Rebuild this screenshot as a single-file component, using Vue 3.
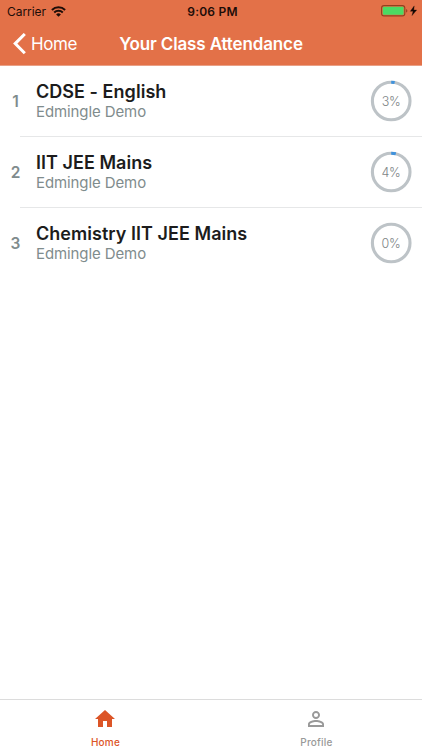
<script setup>
const classes = [
  { id: 1, name: 'CDSE - English', org: 'Edmingle Demo', percent: 3 },
  { id: 2, name: 'IIT JEE Mains', org: 'Edmingle Demo', percent: 4 },
  { id: 3, name: 'Chemistry IIT JEE Mains', org: 'Edmingle Demo', percent: 0 },
]
</script>

<template>
  <div class="screen">
    <header class="header">
      <div class="status">
        <div class="status-left">
          <span class="carrier">Carrier</span>
          <svg width="15" height="11" viewBox="0 0 15 11">
            <path d="M.9 4a9.5 9.5 0 0 1 13.2 0M3.2 6.5a6.1 6.1 0 0 1 8.6 0" fill="none" stroke="#1d0d08" stroke-width="2" />
            <path d="M5.1 8.4a3.4 3.4 0 0 1 4.8 0L7.5 10.8z" fill="#1d0d08" />
          </svg>
        </div>
        <span class="clock">9:06 PM</span>
        <div class="status-right">
          <svg width="37" height="12" viewBox="0 0 37 12">
            <rect x="0.6" y="0.6" width="23.2" height="10.3" rx="2.4" fill="none" stroke="#93401f" stroke-width="1.1" />
            <rect x="1.8" y="1.8" width="20.8" height="7.9" rx="1" fill="#4bdb63" />
            <path d="M25.1 4c1.7.4 1.7 3.2 0 3.6z" fill="#93401f" />
            <path d="M33.2.9 29.3 6.3h2.8l-1.1 4.3 4.7-5.6h-2.9z" fill="#120704" stroke="#120704" stroke-width=".3" />
          </svg>
        </div>
      </div>
      <nav class="nav">
        <div class="back">
          <svg width="14" height="22" viewBox="0 0 14 22">
            <path d="M12.8 1 3.2 10.6l9.6 9.6" fill="none" stroke="#fff" stroke-width="3" />
          </svg>
          <span class="back-label">Home</span>
        </div>
        <h1 class="title">Your Class Attendance</h1>
      </nav>
    </header>

    <main class="list">
      <div v-for="item in classes" :key="item.id" class="row">
        <span class="index">{{ item.id }}</span>
        <div class="info">
          <div class="name">{{ item.name }}</div>
          <div class="org">{{ item.org }}</div>
        </div>
        <div class="ring">
          <svg width="42" height="42" viewBox="0 0 42 42">
            <circle cx="21.2" cy="21" r="18.8" fill="none" stroke="#bdc3c7" stroke-width="3.1" />
            <circle v-if="item.percent" cx="21.2" cy="21" r="18.8" fill="none" stroke="#3f92dc" stroke-width="3.1" pathLength="100" :stroke-dasharray="`${item.percent} 100`" transform="rotate(-90 21.2 21)" />
          </svg>
          <span class="percent">{{ item.percent }}%</span>
        </div>
      </div>
    </main>

    <footer class="tabs">
      <div class="tab active">
        <svg width="24" height="24" viewBox="0 0 24 24">
          <path d="M10 20v-6h4v6h5v-8h3L12 3 2 12h3v8z" fill="#dc5527" />
        </svg>
        <span>Home</span>
      </div>
      <div class="tab">
        <svg width="24" height="24" viewBox="0 0 24 24">
          <path d="M12 5.9a2.1 2.1 0 1 1 0 4.2 2.1 2.1 0 0 1 0-4.2m0 9c2.97 0 6.1 1.46 6.1 2.1v1.1H5.9V17c0-.64 3.13-2.1 6.1-2.1M12 4C9.79 4 8 5.79 8 8s1.79 4 4 4 4-1.79 4-4-1.79-4-4-4m0 9c-2.67 0-8 1.34-8 4v3h16v-3c0-2.66-5.33-4-8-4" fill="#999" />
        </svg>
        <span>Profile</span>
      </div>
    </footer>
  </div>
</template>

<style>
body {
  margin: 0;
}
</style>

<style scoped>
.screen {
  width: 422px;
  height: 750px;
  display: flex;
  flex-direction: column;
  overflow: hidden;
  background: #fff;
  font-family: Inter, "Liberation Sans", sans-serif;
  white-space: nowrap;
}
svg {
  display: block;
  flex: none;
}
.header {
  flex: none;
  box-sizing: border-box;
  height: 66px;
  background: #e37148;
  border-bottom: 1px solid #e9a086;
}
.status {
  display: grid;
  grid-template-columns: 1fr auto 1fr;
  align-items: center;
  height: 22px;
  padding: 0 4px 0 7px;
  color: #1d0d08;
}
.status-left {
  display: flex;
  align-items: center;
  gap: 5px;
}
.carrier {
  font-size: 12px;
  letter-spacing: -0.05px;
}
.clock {
  font-size: 12px;
  font-weight: 600;
  letter-spacing: 0.2px;
}
.status-right {
  display: flex;
  justify-content: flex-end;
}
.nav {
  display: grid;
  grid-template-columns: 1fr auto 1fr;
  align-items: center;
  height: 43px;
  color: #fff;
}
.back {
  display: flex;
  align-items: center;
  gap: 5px;
  padding-left: 12px;
}
.back-label {
  font-size: 17px;
  line-height: 22px;
  letter-spacing: -0.4px;
}
.title {
  margin: 0;
  font-size: 17px;
  line-height: 22px;
  font-weight: 600;
  letter-spacing: -0.13px;
}
.list {
  flex: 1;
}
.row {
  position: relative;
  display: flex;
  align-items: center;
  box-sizing: border-box;
  height: 71.15px;
  padding-bottom: 1px;
}
.row:not(:last-child)::after {
  content: "";
  position: absolute;
  left: 20px;
  right: 0;
  bottom: 0;
  height: 1px;
  background: #e6e7e8;
}
.index {
  width: 31px;
  flex: none;
  text-align: center;
  font-size: 15.5px;
  font-weight: 600;
  color: #7f8c8d;
}
.info {
  flex: 1;
  padding: 2px 0 1px 5px;
}
.name {
  font-size: 18px;
  line-height: 20px;
  font-weight: 600;
  letter-spacing: 0.04px;
  color: #1c1c1c;
}
.org {
  font-size: 15px;
  line-height: 19px;
  letter-spacing: -0.1px;
  color: #7f8c8d;
}
.ring {
  display: grid;
  place-items: center;
  margin-right: 10px;
}
.ring > * {
  grid-area: 1 / 1;
}
.percent {
  font-size: 12.5px;
  font-weight: 300;
  letter-spacing: -0.3px;
  color: #7d8486;
}
.tabs {
  flex: none;
  box-sizing: border-box;
  display: flex;
  height: 51px;
  border-top: 1px solid #dcdcdc;
}
.tab {
  flex: 1;
  display: flex;
  flex-direction: column;
  align-items: center;
  padding: 7px 1px 0 0;
  gap: 5px;
  color: #999;
  font-size: 10px;
  line-height: 13px;
  font-weight: 500;
  letter-spacing: 0.2px;
}
.tab span {
  padding-left: 1px;
}
.active {
  color: #dc5527;
}
</style>
